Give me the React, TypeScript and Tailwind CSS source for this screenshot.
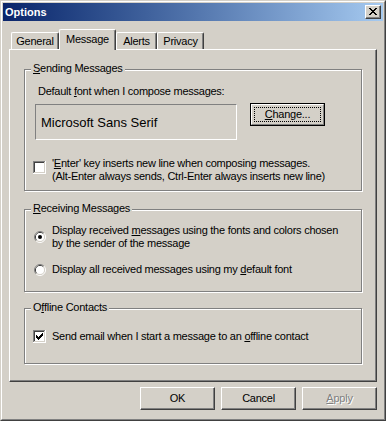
import React from 'react';

const face = "#d4d0c8";

const CheckBox = ({ checked }: { checked?: boolean }) => (
  <svg width="13" height="13" viewBox="0 0 13 13" shapeRendering="crispEdges" className="shrink-0">
    <rect x="0" y="0" width="12" height="1" fill="#808080" />
    <rect x="0" y="0" width="1" height="12" fill="#808080" />
    <rect x="0" y="12" width="13" height="1" fill="#ffffff" />
    <rect x="12" y="0" width="1" height="13" fill="#ffffff" />
    <rect x="1" y="1" width="10" height="1" fill="#404040" />
    <rect x="1" y="1" width="1" height="10" fill="#404040" />
    <rect x="1" y="11" width="11" height="1" fill={face} />
    <rect x="11" y="1" width="1" height="11" fill={face} />
    <rect x="2" y="2" width="9" height="9" fill="#ffffff" />
    {checked && (
      <g fill="#000">
        <rect x="3" y="5" width="1" height="3" />
        <rect x="4" y="6" width="1" height="3" />
        <rect x="5" y="7" width="1" height="3" />
        <rect x="6" y="6" width="1" height="3" />
        <rect x="7" y="5" width="1" height="3" />
        <rect x="8" y="4" width="1" height="3" />
        <rect x="9" y="3" width="1" height="3" />
      </g>
    )}
  </svg>
);

const Radio = ({ checked }: { checked?: boolean }) => (
  <svg width="12" height="12" viewBox="0 0 12 12" className="shrink-0">
    <path d="M2.11 9.89 A5.5 5.5 0 0 1 9.89 2.11" fill="none" stroke="#808080" />
    <path d="M9.89 2.11 A5.5 5.5 0 0 1 2.11 9.89" fill="none" stroke="#ffffff" />
    <path d="M2.82 9.18 A4.5 4.5 0 0 1 9.18 2.82" fill="none" stroke="#404040" />
    <path d="M9.18 2.82 A4.5 4.5 0 0 1 2.82 9.18" fill="none" stroke={face} />
    <circle cx="6" cy="6" r="4" fill="#ffffff" />
    {checked && <circle cx="6" cy="6" r="2" fill="#000" />}
  </svg>
);

const GroupBox = ({ title, className, children }: { title: React.ReactNode; className: string; children: React.ReactNode }) => (
  <div className={`relative ml-[14px] w-[338px] border border-[#808080] shadow-[1px_1px_0_#fff,inset_1px_1px_0_#fff] ${className}`}>
    <span className="absolute left-[6px] -top-[8px] bg-[#d4d0c8] px-[2px] leading-[13px]">{title}</span>
    {children}
  </div>
);

const Button = ({ children, disabled }: { children: React.ReactNode; disabled?: boolean }) => (
  <div className="w-[75px] h-[23px] border border-t-white border-l-white border-r-[#404040] border-b-[#404040] shadow-[inset_-1px_-1px_0_#808080] flex items-center justify-center">
    <span className={disabled ? "text-[#808080] [text-shadow:1px_1px_0_#fff]" : ""}>{children}</span>
  </div>
);

const u = "underline underline-offset-[1px] decoration-1";

export default function App() {
  return (
    <div className="w-[386px] h-[421px] bg-[#d4d0c8] border border-t-[#d4d0c8] border-l-[#d4d0c8] border-r-[#404040] border-b-[#404040] font-['Liberation_Sans',Arial,sans-serif] text-[11px] leading-[13px] tracking-[-0.25px] text-black select-none">
      <div className="h-full border border-t-white border-l-white border-r-[#808080] border-b-[#808080] p-[1px] flex flex-col">
        {/* title bar */}
        <div className="h-[18px] shrink-0 bg-linear-to-r from-[#0a246a] to-[#a6caf0] flex items-center justify-between pl-[2px] pr-[2px]">
          <span className="text-white font-bold tracking-normal">Options</span>
          <div className="w-[16px] h-[14px] bg-[#d4d0c8] border border-t-white border-l-white border-r-[#404040] border-b-[#404040] shadow-[inset_-1px_-1px_0_#808080] flex items-center justify-center">
            <svg width="8" height="7" viewBox="0 0 8 7" shapeRendering="crispEdges" className="-mt-[1px] -ml-[1px]">
              <path d="M0 0h2v1H0zM6 0h2v1H6zM1 1h2v1H1zM5 1h2v1H5zM2 2h4v1H2zM3 3h2v1H3zM2 4h4v1H2zM1 5h2v1H1zM5 5h2v1H5zM0 6h2v1H0zM6 6h2v1H6z" fill="#000" />
            </svg>
          </div>
        </div>

        {/* tabs */}
        <div className="h-[28px] shrink-0 mx-[6px] pl-[2px] flex items-end">
          <div className="w-[48px] h-[17px] border-t border-x border-t-white border-l-white border-r-[#404040] shadow-[inset_-1px_0_0_#808080] rounded-t-[2px] flex items-center justify-center">General</div>
          <div className="w-[57px] h-[21px] -mb-[1px] relative z-10 bg-[#d4d0c8] border-t border-x border-t-white border-l-white border-r-[#404040] shadow-[inset_-1px_0_0_#808080] rounded-t-[2px] flex items-center justify-center pb-[2px]">Message</div>
          <div className="w-[41px] h-[17px] border-t border-x border-t-white border-l-white border-r-[#404040] shadow-[inset_-1px_0_0_#808080] rounded-t-[2px] flex items-center justify-center">Alerts</div>
          <div className="w-[47px] h-[17px] border-t border-x border-t-white border-l-white border-r-[#404040] shadow-[inset_-1px_0_0_#808080] rounded-t-[2px] flex items-center justify-center">Privacy</div>
        </div>

        {/* panel */}
        <div className="mx-[6px] h-[333px] shrink-0 border border-t-white border-l-white border-r-[#404040] border-b-[#404040] shadow-[inset_-1px_-1px_0_#808080] flex flex-col">
          <GroupBox title={<><span className={u}>S</span>ending Messages</>} className="mt-[19px] h-[122px] pl-[8px] pt-[15px]">
            <div className="ml-[5px] h-[13px]">Default <span className={u}>f</span>ont when I compose messages:</div>
            <div className="mt-[5px] flex items-start">
              <div className="ml-[2px] mt-[1px] w-[202px] h-[36px] border border-t-[#808080] border-l-[#808080] border-r-white border-b-white flex items-center pl-[5px] text-[13px] tracking-normal">
                Microsoft Sans Serif
              </div>
              <div className="ml-[13px] w-[75px] h-[23px] relative border border-black">
                <div className="h-full border border-t-white border-l-white border-r-[#808080] border-b-[#808080] flex items-center justify-center">
                  <span><span className={u}>C</span>hange...</span>
                </div>
                <div className="absolute inset-[3px] border border-dotted border-black" />
              </div>
            </div>
            <div className="mt-[17px] flex items-start">
              <div className="mt-[4px]"><CheckBox /></div>
              <div className="ml-[6px]">
                '<span className={u}>E</span>nter' key inserts new line when composing messages.<br />
                (Alt-Enter always sends, Ctrl-Enter always inserts new line)
              </div>
            </div>
          </GroupBox>

          <GroupBox title={<><span className={u}>R</span>eceiving Messages</>} className="mt-[18px] h-[83px] pl-[8px] pt-[14px]">
            <div className="flex items-start">
              <div className="ml-[1px] mt-[7px]"><Radio checked /></div>
              <div className="ml-[6px]">
                Display received <span className={u}>m</span>essages using the fonts and colors chosen<br />
                by the sender of the message
              </div>
            </div>
            <div className="mt-[13px] flex items-start">
              <div className="ml-[1px] mt-[1px]"><Radio /></div>
              <div className="ml-[6px]">Display all received messages using my <span className={u}>d</span>efault font</div>
            </div>
          </GroupBox>

          <GroupBox title={<>O<span className={u}>f</span>fline Contacts</>} className="mt-[16px] h-[56px] pl-[8px] pt-[21px]">
            <div className="flex items-start">
              <CheckBox checked />
              <div className="ml-[6px]">Send email when I start a message to an <span className={u}>o</span>ffline contact</div>
            </div>
          </GroupBox>
        </div>

        {/* buttons */}
        <div className="mt-[5px] mr-[6px] flex justify-end gap-[6px]">
          <Button>OK</Button>
          <Button>Cancel</Button>
          <Button disabled><span className={u}>A</span>pply</Button>
        </div>
      </div>
    </div>
  );
}
